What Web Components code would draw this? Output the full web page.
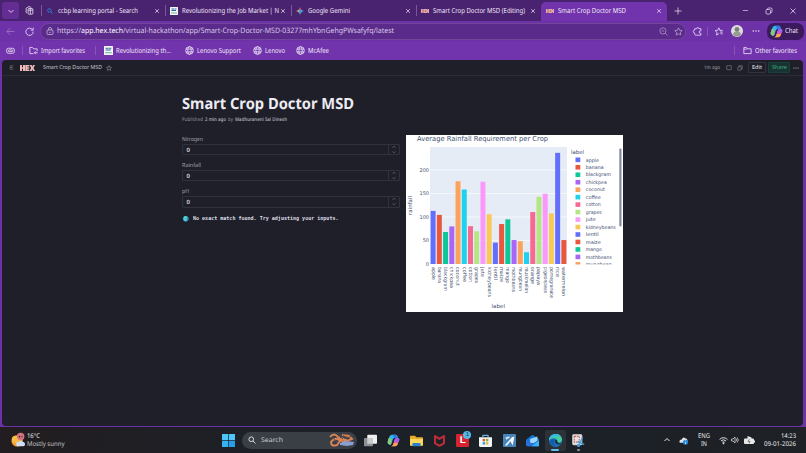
<!DOCTYPE html>
<html lang="en">
<head>
<meta charset="utf-8">
<title>Smart Crop Doctor MSD</title>
<style>
    html, body {
        margin: 0;
        width: 806px;
        height: 453px;
        overflow: hidden;
        background: #6d31a8;
    }
    body {
        display: flex;
        flex-direction: column;
        font-family: "Noto Sans", "Open Sans", sans-serif;
        font-size: 7px;
        line-height: 1;
        color: #f1e8f8;
        text-rendering: geometricPrecision;
    }
    b { font-weight: inherit; color: #fff; }
</style>
</head>
<body>
<tab-strip>
    <browser-tab icon="search" style="width:124px"><fit-text width="80">ccbp learning portal - Search</fit-text></browser-tab>
    <browser-tab icon="page" style="width:126px"><fit-text width="97">Revolutionizing the Job Market | N</fit-text></browser-tab>
    <browser-tab icon="gemini" style="width:125px"><fit-text width="42">Google Gemini</fit-text></browser-tab>
    <browser-tab icon="hex" style="width:125px"><fit-text width="92">Smart Crop Doctor MSD (Editing)</fit-text></browser-tab>
    <browser-tab icon="hex" active style="width:126px"><fit-text width="68">Smart Crop Doctor MSD</fit-text></browser-tab>
</tab-strip>
<address-bar><fit-text width="337">https://<b>app.hex.tech</b>/virtual-hackathon/app/Smart-Crop-Doctor-MSD-03277mhYbnGehgPWsafyfq/latest</fit-text></address-bar>
<favorites-bar></favorites-bar>
<hex-app></hex-app>
<task-bar></task-bar>

<script>
const ICONS = {
    chevron: '<path d="M3 6l5 5 5-5"/>',
    up: '<path d="M3 10l5-5 5 5"/>',
    close: '<path d="M3 3l10 10M13 3L3 13"/>',
    plus: '<path d="M8 1v14M1 8h14"/>',
    minus: '<path d="M2 8h12"/>',
    restore: '<rect x="2" y="5" width="9" height="9" rx="2"/><path d="M5 5V4a2 2 0 0 1 2-2h5a2 2 0 0 1 2 2v5a2 2 0 0 1-2 2h-1"/>',
    workspaces: '<rect x="5.500" y="4.500" width="8.500" height="10" rx="1.500"/><path d="M3.500 12.500L2 11.500V4l5-3 4 1.500M5.500 7.500h8.500M9.500 4.500v10"/>',
    search: '<circle cx="6.500" cy="6.500" r="4.700"/><path d="M10 10l5 5"/>',
    back: '<path d="M15 8H1.500M7.500 2l-6 6 6 6"/>',
    reload: '<path d="M13.500 5A6.500 6.500 0 1 0 14.500 8M14.500 1v4.500H10"/>',
    lock: '<rect x="2" y="6" width="12" height="9" rx="2"/><path d="M5 6V4a3 3 0 0 1 6 0v2"/><circle cx="8" cy="10.500" r=".7"/>',
    zoomout: '<circle cx="7" cy="7" r="5.500"/><path d="M11 11l4 4M4.500 7h5"/>',
    star: '<path d="M8 1.500l2 4.300 4.600.6-3.400 3.200.9 4.700L8 12l-4.100 2.300.9-4.700L1.400 6.400 6 5.800z"/>',
    ext: '<path d="M3 3h3.500a2 2 0 0 1 4 0H14v4h-1a2 2 0 0 0 0 4h1v3.500H4.500A2 2 0 0 1 3 13v-2.500a2.500 2.500 0 0 1 0-5z"/>',
    favs: '<path d="M9 11.500l-4.600 2.800.9-4.700L2 6.400l4.600-.6 2-4.300 2 4.300M10 6h5.500M10.500 9h5M11.500 12h4"/>',
    dots: '<g fill="currentColor" stroke="none"><circle cx="2.500" cy="8" r="1.500"/><circle cx="8" cy="8" r="1.500"/><circle cx="13.500" cy="8" r="1.500"/></g>',
    folder: '<path d="M1.500 13.500v-11h4.500l2 2.500h6.500v8.500zM1.500 5.500h5l1.500-1"/>',
    import: '<path d="M8 13.500H1.500v-11h4.500l2 2.500h6.500v4M9.500 12h6M12 9.500L9.500 12l2.500 2.500"/>',
    gamepad: '<rect x="1" y="4" width="14" height="9" rx="3.500"/><rect x="4" y="7" width="8" height="3" rx="1"/>',
    globe: '<circle cx="8" cy="8" r="6.800"/><ellipse cx="8" cy="8" rx="3" ry="6.800"/><path d="M1.500 5.500h13M1.500 10.500h13"/>',
    menu: '<path d="M2 3h12M2 8h9M2 13h12"/>',
    comment: '<path d="M2 2h12v10H9.500L8 14l-1.500-2H2z"/>',
    copy: '<rect x="2" y="5" width="9" height="9" rx="1"/><path d="M5 5V2h9v9h-3"/>',
    page: '<g stroke="none"><rect width="16" height="16" rx="1" fill="#f4f6f8"/><path fill="#25659a" d="M3 3h5v2H3zM9 3h4v2H9zM3 6h9v2H3z"/><path fill="#69b7a8" d="M2 11h12v2H2z"/></g>',
    gemini: '<g stroke="none"><path d="M8 0Q9 4.500 11 5.500L8 8 5 5.500Q7 4.500 8 0" fill="#ec5c4c"/><path d="M16 8q-4.500 1-5.500 3L8 8l3-2.500Q11.500 7 16 8" fill="#51a6f8"/><path d="M0 8q4.500-1 5-2.500L8 8l-3 2.500Q4 9 0 8" fill="#e8bf4d"/><path d="M8 16q-1-4.500-3-5.500L8 8l3 2.500Q9 11.500 8 16" fill="#4dbb83"/><circle cx="8.500" cy="8" r="2.800" fill="#4c8cf5"/></g>',
    hex: '<g stroke="none"><path d="M0 4h16v8H0z" fill="#e4a8a8"/><path fill="#8d5573" d="M2 4h1v3H2zM2 9h1v3H2zM5 4h.8v8H5zM7.500 6h3v1h-3zM7.500 9h3v1h-3zM12.500 4h1.500v2h-1.500zM12.500 10h1.500v2h-1.500z"/></g>',
    avatar: '<g stroke="none"><circle cx="8" cy="8" r="8" fill="#dedede"/><circle cx="8" cy="6" r="3.300" fill="#7c817c"/><path d="M2.500 13.300c0-6 11-6 11 0A8 8 0 0 1 2.500 13.300z" fill="#969b96"/></g>',
    copilot: '<g stroke="none"><path d="M6 1h5q1.500 0 2 2l.5 2H9Q7.500 5 7 7L5.500 12Q5 14 3 13Q0 12 1 9l2-6Q4 1 6 1z" fill="#33b5e9"/><path d="M1 9l1-4 4 1-1 6q-.5 2-2 1-3-1-2-4z" fill="#8ac87a"/><path d="M7 1h4q1.500 0 2 2l.5 2H9z" fill="#3477e5"/><path d="M10 15H5q2 0 2.500-2L9 8q.5-3 3-3 4 0 3 3l-2 5q-.8 2-3 2z" fill="#e45aac"/><path d="M5 15q2 0 2.500-2l.6-2 5.500.5-.6 1.500q-.8 2-3 2z" fill="#f7a34a"/><path d="M9 8q.5-3 3-3 4 0 3 3l-.6 1.500L9 9z" fill="#9a63ef"/></g>',
    windows: '<g stroke="none" fill="#4dc5f6"><path d="M0 0h7.600v7.600H0z"/><path d="M8.400 0H16v7.600H8.400z"/><path d="M0 8.400h7.600V16H0z" fill="#35b2f1"/><path d="M8.400 8.400H16V16H8.400z" fill="#269eea"/></g>',
    taskview: '<g stroke="none"><rect x="4" y="1" width="12" height="11" rx="1" fill="#efefef"/><rect x="0" y="5" width="11" height="10" rx="1" fill="#8c9095"/><path d="M4 5h7v7H4z" fill="#c9cccd"/></g>',
    explorer: '<g stroke="none"><path d="M0 3q0-1 1-1h5l2 2h7q1 0 1 1v9H0z" fill="#e8ad2b"/><path d="M0 6h16v7q0 1.500-1.500 1.500h-13Q0 14.500 0 13z" fill="#fbd75e"/><path d="M3 15v-3q0-1 1-1h8q1 0 1 1v3z" fill="#2d7fc9"/></g>',
    mcafee: '<path d="M2.500 2.500L8 6l5.500-3.500v9L8 14.500l-5.500-3z" stroke="#b82e38" stroke-width="2.600"/>',
    store: '<g stroke="none"><path d="M4 4V2q0-1 1-1h6q1 0 1 1v2h-1.500V2.500h-5V4z" fill="#6fb3dd"/><path d="M0 4h16v10q0 2-2 2H2q-2 0-2-2z" fill="#f2f4f5"/><path d="M4.500 6h3v3h-3z" fill="#e65432"/><path d="M8.500 6h3v3h-3z" fill="#7cb63b"/><path d="M4.500 10h3v3h-3z" fill="#329ddd"/><path d="M8.500 10h3v3h-3z" fill="#eeb735"/></g>',
    runner: '<g stroke="none"><rect width="16" height="16" rx="1" fill="#4784b9"/><path d="M2 14L11 4l3-1-2 11-3-5-4 5z" fill="#f4f8fb"/><path d="M3 4l4-1 2 1-5 3z" fill="#cfe1ef"/></g>',
    mail: '<g stroke="none"><path d="M0 7l8-6 8 5v9H2q-2 0-2-2z" fill="#1673d3"/><path d="M5 6l9-3v8H5z" fill="#9bd9fa"/><path d="M0 7l8 5 8-5v7q0 1-1 1H2q-2 0-2-2z" fill="#2b6edc"/><path d="M16 8v7H7z" fill="#37b5f2"/></g>',
    edge: '<g stroke="none"><circle cx="8" cy="8" r="8" fill="#197ac9"/><path d="M0 8C0-2 16-3 16 7c0 3-3 4-6 3 2-5-6-7-10-2z" fill="#47cba1"/><path d="M0 8C0-1 11-2 14 3 8 1 2 4 0 8z" fill="#35b8e5"/><path d="M7 8q1.500-2 3 0 0 3.500 5 3.500-1 1.500-4 1.500-4-.5-4-5z" fill="#1c3242"/><path d="M1 8q3-3 6-2-3 5 2 9Q1 15 1 8z" fill="#145cab"/></g>',
    snip: '<rect x="1" y="1" width="11" height="12" rx="1" fill="#e6e1e0" stroke="#d7d2d2"/><path d="M3 3h6v7H3z" stroke="#ba6b65" stroke-dasharray="2 1"/><path d="M13 4L8 15M7 9l8 4" stroke="#459dda" stroke-width="1.600"/><circle cx="8" cy="14" r="1.300" stroke="#459dda"/>',
    cloud: '<g stroke="none"><path d="M1 11q-1-5 4-5 2-5 6-2 4 0 4 5t-4 3H3q-2 0-2-1z" fill="#dfe5e9"/><circle cx="11.500" cy="11" r="4.500" fill="#278bdd"/><path d="M11 8h1v1h-1zM11 10h1v4h-1z" fill="#fff"/></g>',
    wifi: '<path d="M1 6q7-6 14 0M3.500 8.700q4.500-4 9 0M6 11q2-1.500 4 0" stroke-width="1.700"/><circle cx="8" cy="13" r="1" fill="currentColor"/>',
    volume: '<path d="M1 6h3l4-4v12l-4-4H1zM10.500 5.500q2 2.500 0 5M12.500 3q4 5 0 10"/>',
    weather: '<g stroke="none"><circle cx="7" cy="9" r="6.500" fill="#f2a32e"/><circle cx="5" cy="7" r="4" fill="#f8bd43"/><path d="M6 14q-1-4 3-4 2-3 4 0 3 0 3 3 0 2-2 2H7z" fill="#cfe0f5"/><circle cx="11" cy="4" r="4.300" fill="#d77580"/><path d="M9 3h1.500v2H9zM12 3h1v2h-1z" fill="#47252c"/></g>',
    earth: '<g stroke="none"><circle cx="8" cy="8" r="8" fill="#42b9dd"/><path d="M5 1q6 0 6 4L7 8 2 5zM3 9l5 1 1 5-4-1z" fill="#56dfbd"/><path d="M12 2q4 3 4 7t-5 7q3-8 1-14z" fill="#3477b5"/></g>'
};

function define(name, html, setup) {
    customElements.define(name, class extends HTMLElement {
        connectedCallback() {
            if (this.shadowRoot) return;
            this.attachShadow({ mode: 'open' });
            this.shadowRoot.innerHTML = typeof html === 'function' ? html(this) : html;
            if (setup) setup(this);
        }
    });
}

define('ui-icon', el => {
    const size = el.getAttribute('size') || 9;
    return `
    <style>
        :host { display: inline-block; flex: none; width: ${size}px; height: ${size}px; }
        svg { display: block; width: 100%; height: 100%; overflow: visible; }
    </style>
    <svg viewBox="0 0 16 16" fill="none" stroke="currentColor" stroke-width="${el.getAttribute('stroke') || 1.4}" stroke-linejoin="round">${ICONS[el.getAttribute('name')]}</svg>`;
});

define('tab-strip', `
    <style>
        :host { display: flex; height: 21px; flex: none; background: #492270; align-items: center; }
        .menu { width: 17px; height: 17px; margin-left: 2px; border-radius: 3px; background: #642d94; display: flex; align-items: center; justify-content: center; }
        .ws { margin: 0 7px 0 6px; }
        .tabs { display: flex; height: 21px; }
        .new { margin-left: 7px; }
        .controls { display: flex; gap: 16px; margin-left: auto; padding-right: 9px; }
    </style>
    <div class="menu"><ui-icon name="chevron" size="8" stroke="1.700"></ui-icon></div>
    <ui-icon class="ws" name="workspaces" size="9"></ui-icon>
    <div class="tabs"><slot></slot></div>
    <ui-icon class="new" name="plus" size="8"></ui-icon>
    <div class="controls">
        <ui-icon name="minus" size="7"></ui-icon>
        <ui-icon name="restore" size="8"></ui-icon>
        <ui-icon name="close" size="8"></ui-icon>
    </div>`);

define('browser-tab', el => `
    <style>
        :host { display: flex; align-items: center; box-sizing: border-box; height: 21px; padding: 0 5px 0 4px; border-left: 1px solid transparent; }
        .sep { width: 1px; height: 11px; margin-left: -5px; margin-right: 4px; background: #79579a; flex: none; }
        :host([active]) { background: #7134ad; border-radius: 5px 5px 0 0; margin-top: 2px; height: 19px; padding-bottom: 2px; }
        :host([active]) .sep { visibility: hidden; }
        .title { flex: 1; display: flex; margin: 0 0 0 4px; min-width: 0; }
        .x { margin-left: 3px; }
    </style>
    <span class="sep"></span>
    <ui-icon name="${el.getAttribute('icon')}" size="8" style="${el.getAttribute('icon') === 'search' ? 'color:#298ae0;width:6px;margin:0 1px' : ''}" stroke="${el.getAttribute('icon') === 'search' ? 2.2 : 1.4}"></ui-icon>
    <div class="title"><slot></slot></div>
    <ui-icon class="x" name="close" size="6" stroke="1.800"></ui-icon>`);

define('address-bar', `
    <style>
        :host { display: flex; align-items: center; height: 20px; flex: none; background: #6d31a8; }
        .nav { display: flex; gap: 10px; padding-left: 6px; width: 34px; flex: none; }
        .nav ui-icon:first-child { opacity: .4; }
        .field { display: flex; align-items: center; box-sizing: border-box; width: 646px; height: 17px; padding: 0 2px 0 4.500px; border: 1px solid #74469b; border-radius: 9px; background: #5a2b8a; font-size: 7.500px; color: #d9c9e8; }
        .url { flex: 1; display: flex; margin-left: 3.500px; }
        .field .z { margin-right: 6px; opacity: .65; }
        .tools { display: flex; align-items: center; margin-left: 7px; flex: 1; }
        .line { width: 1px; height: 9px; background: #8855b7; margin: 0 6px 0 5px; }
        .chat { display: flex; align-items: center; gap: 2px; box-sizing: border-box; width: 37px; height: 17px; padding-left: 3px; border-radius: 7px; background: #3b1a5e; margin-left: 7px; }
    </style>
    <div class="nav"><ui-icon name="back"></ui-icon><ui-icon name="reload"></ui-icon></div>
    <div class="field">
        <ui-icon name="lock" size="8"></ui-icon>
        <div class="url"><slot></slot></div>
        <ui-icon class="z" name="zoomout" size="9"></ui-icon>
        <ui-icon name="star" size="9" style="opacity:.75"></ui-icon>
    </div>
    <div class="tools">
        <ui-icon name="ext"></ui-icon><span class="line"></span>
        <ui-icon name="favs"></ui-icon>
        <ui-icon name="avatar" size="12" style="margin:0 9px 0 8px"></ui-icon>
        <ui-icon name="dots" size="8"></ui-icon>
        <div class="chat"><ui-icon name="copilot" size="13"></ui-icon><fit-text width="13">Chat</fit-text></div>
    </div>`);

define('favorites-bar', `
    <style>
        :host { display: flex; align-items: center; height: 19px; flex: none; background: #7134ad; }
        .item { display: flex; align-items: center; gap: 3px; }
        .line { width: 1px; height: 9px; background: #8855b7; flex: none; }
    </style>
    <ui-icon name="gamepad" size="9" style="margin:0 7px 0 6px"></ui-icon><span class="line"></span>
    <div class="item" style="margin-left:6px"><ui-icon name="import" size="9"></ui-icon><fit-text width="44">Import favorites</fit-text></div>
    <span class="line" style="margin-left:10px"></span>
    <div class="item" style="margin-left:8px"><ui-icon name="page" size="9"></ui-icon><fit-text width="55">Revolutionizing th...</fit-text></div>
    <div class="item" style="margin-left:14px"><ui-icon name="globe" size="9"></ui-icon><fit-text width="44">Lenovo Support</fit-text></div>
    <div class="item" style="margin-left:12px"><ui-icon name="globe" size="9"></ui-icon><fit-text width="20">Lenovo</fit-text></div>
    <div class="item" style="margin-left:11px"><ui-icon name="globe" size="9"></ui-icon><fit-text width="21">McAfee</fit-text></div>
    <span class="line" style="margin-left:auto;margin-right:8px"></span>
    <div class="item" style="margin-right:9px"><ui-icon name="folder" size="9"></ui-icon><fit-text width="42">Other favorites</fit-text></div>`);

define('hex-app', `
    <style>
        :host { display: block; box-sizing: border-box; height: 366px; margin: 0 3px 0 2px; flex: none; border-radius: 4px; background: #1f1f2a; color: #c5c5ce; overflow: hidden; }
        header { display: flex; align-items: center; height: 15px; border-bottom: 1px solid #2c2c38; font-size: 5.500px; }
        .logo { display: flex; margin: 0 8px 0 6px; width: 15px; height: 6px; }
        .logo svg { width: 15px; height: 6px; }
        .right { display: flex; align-items: center; margin-left: auto; padding-right: 4px; }
        .btn { box-sizing: border-box; height: 11px; border: 1px solid #34343f; border-radius: 1px; display: flex; align-items: center; justify-content: center; }
        main { display: flex; padding: 16px 0 0 180px; }
        .left { width: 217.500px; }
        h1 { margin: 0; height: 21px; display: flex; align-items: center; font-size: 15.500px; font-weight: 700; color: #ececf2; }
        .by { display: flex; align-items: center; gap: 2px; height: 8px; margin-top: 3.300px; font-size: 5px; color: #85858f; font-weight: 500; }
        .by fit-text.hi { color: #a9a9b4; font-weight: 600; }
        .fields { margin-top: 9.500px; }
        .msg { display: flex; align-items: center; gap: 4px; margin: 3px 0 0 1px; font: 700 5.400px "DejaVu Sans Mono", monospace; color: #dedee6; }
        rainfall-chart { margin: 43px 0 0 6.500px; }
    </style>
    <header>
        <ui-icon name="menu" size="5" stroke="2" style="margin-left:7px;opacity:.65"></ui-icon>
        <div class="logo"><svg viewBox="0 0 15 7" preserveAspectRatio="none"><path fill="#eebbb9" d="M0 0h2v2.700h1V0h2v7H3V4.300H2V7H0zM5.300 0h4v1.700h-2v1h2v1.600h-2v1h2V7h-4zM9.600 0h2l.8 2 .6-2h2l-1.500 3.500L15 7h-2l-.7-2-.7 2h-2l1.500-3.500z"/></svg></div>
        <fit-text width="59">Smart Crop Doctor MSD</fit-text>
        <ui-icon name="star" size="6" style="margin-left:4px;opacity:.8"></ui-icon>
        <div class="right">
            <fit-text width="16" style="font-size:5px;color:#a5a5ae">1m ago</fit-text>
            <ui-icon name="comment" size="6" style="margin-left:6px;opacity:.7"></ui-icon>
            <ui-icon name="copy" size="6" style="margin:0 5px 0 5px;opacity:.7"></ui-icon>
            <div class="btn" style="width:18px;color:#eee"><fit-text width="10">Edit</fit-text></div>
            <div class="btn" style="width:22px;margin:0 3px 0 2px;background:#183432;border-color:#1c4039;color:#3cab7b"><fit-text width="15">Share</fit-text></div>
            <ui-icon name="dots" size="6"></ui-icon>
        </div>
    </header>
    <main>
        <div class="left">
            <h1><fit-text width="172">Smart Crop Doctor MSD</fit-text></h1>
            <div class="by"><fit-text width="21">Published</fit-text><fit-text class="hi" width="21">2 min ago</fit-text><fit-text width="5">by</fit-text><fit-text class="hi" width="52">Madhuraneni Sai Dinesh</fit-text></div>
            <div class="fields">
                <number-field label="Nitrogen" w="21"></number-field>
                <number-field label="Rainfall" w="19"></number-field>
                <number-field label="pH" w="7"></number-field>
            </div>
            <div class="msg"><ui-icon name="earth" size="5.500"></ui-icon><fit-text width="145.500">No exact match found. Try adjusting your inputs.</fit-text></div>
        </div>
        <rainfall-chart></rainfall-chart>
    </main>`);

define('number-field', el => `
    <style>
        :host { display: block; height: 26.200px; }
        .label { display: flex; align-items: center; height: 8px; margin-bottom: 2px; font-size: 5.700px; color: #a3a3ae; }
        .box { display: flex; box-sizing: border-box; height: 11.500px; border: 1px solid #32323e; border-radius: 1px; font-size: 6px; font-weight: 600; color: #dcdce4; align-items: center; }
        .value { flex: 1; padding-left: 3.500px; }
        .step { box-sizing: border-box; width: 11px; align-self: stretch; border-left: 1px solid #32323e; display: flex; flex-direction: column; align-items: center; justify-content: center; gap: 1px; color: #8c8c98; }
    </style>
    <div class="label"><fit-text width="${el.getAttribute('w')}">${el.getAttribute('label')}</fit-text></div>
    <div class="box"><span class="value">0</span><div class="step"><ui-icon name="up" size="4" stroke="2.500"></ui-icon><ui-icon name="chevron" size="4" stroke="2.500"></ui-icon></div></div>`);

const PALETTE = ['#636efa', '#e8573e', '#0cc797', '#a965f6', '#fba25d', '#1fd0ef', '#f66991', '#b5e585', '#fb99fb', '#fac858'];
const RAINFALL = [
    ['apple', 113], ['banana', 104.5], ['blackgram', 68], ['chickpea', 80], ['coconut', 176], ['coffee', 158.5],
    ['cotton', 80.5], ['grapes', 69.5], ['jute', 175], ['kidneybeans', 106], ['lentil', 45.5], ['maize', 85],
    ['mango', 95], ['mothbeans', 51], ['mungbean', 48.5], ['muskmelon', 25], ['orange', 110.5], ['papaya', 143],
    ['pigeonpeas', 149.5], ['pomegranate', 107.5], ['rice', 236.5], ['watermelon', 51]
];
// rendered length of the rotated tick labels
const TICK_LENGTHS = [13, 16, 24, 21, 19, 15, 15, 16, 10, 30, 13, 15, 16, 25, 24, 26, 17, 18, 26, 31, 10, 29];
const LEGEND_LENGTHS = [13, 18, 25, 21, 19, 15, 15, 16, 10, 30, 13, 15, 16, 26, 26];

// plot area starts at (24, 12), is 137 wide, and has its baseline at y = 129
define('rainfall-chart', () => {
    const step = 137 / 22;
    const y = v => 129 - v * 0.47;
    const grid = [50, 100, 150, 200].map(v => `<path d="M24 ${y(v)}h137" stroke="#fff" stroke-width=".6"/>`).join('');
    const yTicks = [0, 50, 100, 150, 200].map(v => `<text x="23" y="${y(v) + 1.8}" text-anchor="end" font-size="5">${v}</text>`).join('');
    const bars = RAINFALL.map(([name, v], i) => `<rect x="${24 + step * (i + 0.1)}" y="${y(v)}" width="${step * 0.8}" height="${v * 0.47}" fill="${PALETTE[i % 10]}"/>`).join('');
    const ticks = RAINFALL.map(([name], i) => `<text transform="translate(${24 + step * (i + 0.5) - 1.6} 132) rotate(90)" font-size="5" textLength="${TICK_LENGTHS[i]}" lengthAdjust="spacingAndGlyphs">${name}</text>`).join('');
    const legend = RAINFALL.slice(0, 15).map(([name], i) => {
        const cy = 24.8 + i * 7.47;
        return `<rect x="169.500" y="${cy - 2.3}" width="4.800" height="4.600" fill="${PALETTE[i % 10]}"/><text x="179.800" y="${cy + 1.7}" font-size="4.900" textLength="${LEGEND_LENGTHS[i]}" lengthAdjust="spacingAndGlyphs">${name}</text>`;
    }).join('');
    return `
    <style>
        :host { display: block; width: 217px; height: 177px; background: #fff; overflow: hidden; }
        svg { display: block; }
        text { fill: #3f5070; font-family: "DejaVu Sans", sans-serif; }
    </style>
    <svg width="217" height="177" viewBox="0 0 217 177">
        <clipPath id="legend"><path d="M160 12h57v117.500h-57z"/></clipPath>
        <text x="11" y="5.800" font-size="7" textLength="131" lengthAdjust="spacingAndGlyphs">Average Rainfall Requirement per Crop</text>
        <path d="M24 12h137v117H24z" fill="#e5ecf6"/>
        ${grid}${bars}${yTicks}${ticks}
        <text transform="translate(5.500 80) rotate(-90)" font-size="5.500" textLength="19" lengthAdjust="spacingAndGlyphs">rainfall</text>
        <text x="85.500" y="172.500" font-size="5.500" textLength="13.500" lengthAdjust="spacingAndGlyphs">label</text>
        <text x="165" y="19" font-size="5.500" textLength="13" lengthAdjust="spacingAndGlyphs">label</text>
        <g clip-path="url(#legend)">${legend}</g>
        <rect x="213.300" y="13.500" width="2.200" height="78" rx="1" fill="#808ba4"/>
    </svg>`;
});

define('task-bar', `
    <style>
        :host { display: flex; align-items: center; height: 26px; margin-top: 1px; flex: none; background: linear-gradient(90deg, #211d20, #1e2027 30%, #1b2127 60%, #1e2126); color: #e8e8ea; font-size: 6.500px; }
        .weather { display: flex; gap: 2px; margin-left: 11px; width: 211px; align-items: center; }
        .col { display: flex; flex-direction: column; }
        .search { display: flex; align-items: center; box-sizing: border-box; width: 115px; height: 17px; margin: 0 7px; padding-left: 6px; border-radius: 9px; background: #3a3f46; gap: 5px; }
        .search svg { width: 27px; height: 14px; margin-left: auto; margin-right: 2px; }
        .apps { display: flex; align-items: center; gap: 10.100px; }
        .apps > * { flex: none; }
        .lapp { position: relative; width: 13px; height: 13px; background: #d52330; color: #fff; font: 700 10px/13px "Liberation Sans", sans-serif; text-align: center; border-radius: 1px; }
        .badge { position: absolute; right: -2px; top: -3px; width: 8px; height: 8px; border-radius: 50%; background: #57b7e4; color: #12364e; font: 6px/8px "Liberation Sans", sans-serif; }
        .edge { display: flex; align-items: center; justify-content: center; width: 21px; height: 21px; margin: 0 -4px; background: #2d3138; border-radius: 2px; position: relative; }
        .edge::after, .snip::after { content: ""; position: absolute; bottom: 0; width: 8px; height: 1.500px; border-radius: 1px; background: #62bde9; }
        .snip { position: relative; display: flex; justify-content: center; align-items: center; width: 13px; height: 21px; }
        .snip::after { width: 3px; background: #92969b; }
        .tray { display: flex; align-items: center; margin-left: auto; margin-right: 10px; }
    </style>
    <div class="weather">
        <ui-icon name="weather" size="14"></ui-icon>
        <div class="col"><fit-text width="13">16°C</fit-text><fit-text width="37.500" style="color:#c4c2c5">Mostly sunny</fit-text></div>
    </div>
    <ui-icon name="windows" size="13"></ui-icon>
    <div class="search">
        <ui-icon name="search" size="8" stroke="1.800"></ui-icon><fit-text width="22" style="color:#c8cbce">Search</fit-text>
        <svg viewBox="0 0 27 14" fill="none"><path d="M2 4q4-5 8 0l5 5 4-2M3 9q5-6 9-1l-3 4q-6 2-6-3zM14 2l7 1 3 3-5 2-6-3" stroke="#d98455" stroke-width="2"/><path d="M12 10l6-2 8 1-1 3-6 1-7-1z" fill="#899fd0"/><path d="M15 2l4 3 5-2M4 4l5 5M11 3l4 3" stroke="#664b4b"/></svg>
    </div>
    <div class="apps">
        <ui-icon name="taskview" size="13"></ui-icon>
        <ui-icon name="copilot" size="13"></ui-icon>
        <ui-icon name="explorer" size="13"></ui-icon>
        <ui-icon name="mcafee" size="13"></ui-icon>
        <div class="lapp">L<span class="badge">1</span></div>
        <ui-icon name="store" size="13"></ui-icon>
        <ui-icon name="runner" size="13"></ui-icon>
        <ui-icon name="mail" size="13"></ui-icon>
        <div class="edge"><ui-icon name="edge" size="13"></ui-icon></div>
        <div class="snip"><ui-icon name="snip" size="13"></ui-icon></div>
    </div>
    <div class="tray">
        <ui-icon name="up" size="8" stroke="2" style="margin-right:8px"></ui-icon>
        <ui-icon name="cloud" size="9" style="margin-right:10px"></ui-icon>
        <div class="col" style="align-items:center;margin-right:9px"><fit-text width="12">ENG</fit-text><fit-text width="6">IN</fit-text></div>
        <ui-icon name="wifi" size="9" style="margin-right:3px"></ui-icon>
        <ui-icon name="volume" size="8" style="margin-right:5px"></ui-icon>
        <svg width="11" height="9" viewBox="0 0 11 9" style="margin-right:9px"><rect y="2.500" width="10" height="5.500" rx="1" fill="#e8e8e8"/><path d="M10 4.500h1v2h-1zM3.500 0l4 1.500V3h-4z" fill="#e8e8e8"/><path d="M5.500 3L4 5.500h2L5 7.500" stroke="#444" fill="none" stroke-width=".6"/></svg>
        <div class="col" style="align-items:flex-end"><fit-text width="15">14:23</fit-text><fit-text width="32">09-01-2026</fit-text></div>
    </div>`);

// Stretches or condenses its text to a set width.
// Defined last, so every other element is laid out when it measures.
define('fit-text', `
    <style>
        :host { display: block; flex: none; padding-top: 1.400px; white-space: nowrap; line-height: 1.050; }
        span { display: block; width: max-content; transform-origin: 0 50%; }
    </style>
    <span><slot></slot></span>`, el => {
    const span = el.shadowRoot.querySelector('span');
    const width = parseFloat(el.getAttribute('width'));
    const natural = span.getBoundingClientRect().width;
    span.style.transform = `scaleX(${width / natural})`;
    el.style.width = width + 'px';
});
</script>
</body>
</html>
